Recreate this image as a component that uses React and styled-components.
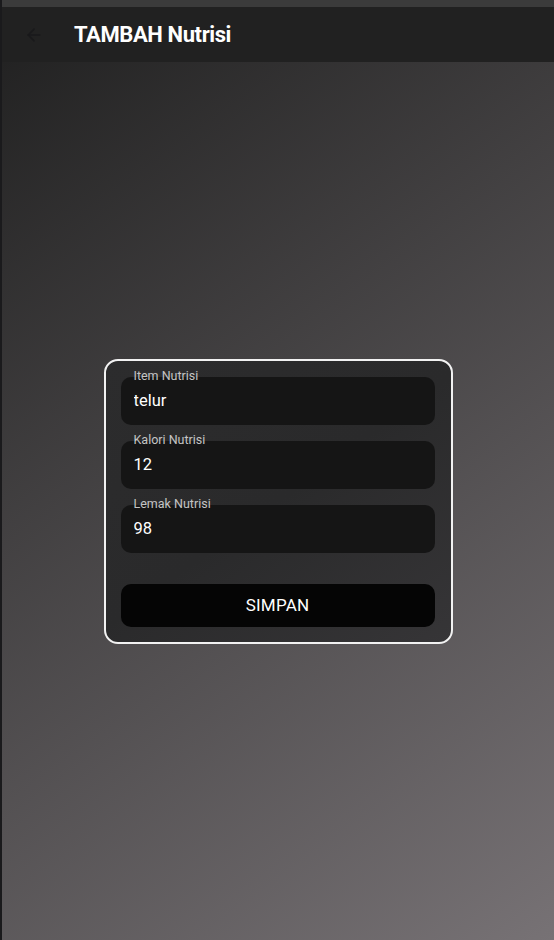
import styled, { createGlobalStyle } from "styled-components";
import { ArrowLeft } from "lucide-react";

const GlobalStyle = createGlobalStyle`
  html, body {
    margin: 0;
    padding: 0;
    background: #2b2b2d;
  }
  body {
    font-family: Roboto, "Noto Sans", sans-serif;
  }
`;

const fields = [
  { label: "Item Nutrisi", value: "telur" },
  { label: "Kalori Nutrisi", value: "12" },
  { label: "Lemak Nutrisi", value: "98" },
];

const App = () => {
  return (
    <Page>
      <GlobalStyle />
      <TopStrip />
      <Header>
        <BackButton aria-label="kembali">
          <ArrowLeft size={20} strokeWidth={2} />
        </BackButton>
        <Title>TAMBAH Nutrisi</Title>
      </Header>
      <Content>
        <Card>
          {fields.map((f) => (
            <Field key={f.label}>
              <Label>{f.label}</Label>
              <Input defaultValue={f.value} />
            </Field>
          ))}
          <SaveButton>SIMPAN</SaveButton>
        </Card>
      </Content>
    </Page>
  );
};

const Page = styled.div`
  width: 554px;
  height: 940px;
  display: flex;
  flex-direction: column;
  box-sizing: border-box;
  border-left: 2px solid #1a1a1c;
  background: linear-gradient(144deg, #1f1f1f 0%, #777275 100%);
  overflow: hidden;
`;

const TopStrip = styled.div`
  height: 7px;
  background: #3b3b3b;
  flex-shrink: 0;
`;

const Header = styled.header`
  height: 55px;
  flex-shrink: 0;
  display: flex;
  align-items: center;
  background: #212121;
  padding-left: 20px;
`;

const BackButton = styled.button`
  border: none;
  background: none;
  padding: 0;
  width: 24px;
  height: 24px;
  display: flex;
  align-items: center;
  justify-content: center;
  color: #19191b;
  margin-right: 28px;
`;

const Title = styled.h1`
  margin: 0;
  font-size: 22px;
  font-weight: 700;
  color: #ffffff;
  letter-spacing: -0.4px;
`;

const Content = styled.main`
  flex: 1;
  display: flex;
  align-items: center;
  justify-content: center;
`;

const Card = styled.div`
  width: 349px;
  box-sizing: border-box;
  border: 2px solid #f2f2f2;
  border-radius: 14px;
  background: linear-gradient(144deg, #2c2c2d 0%, #2a2a2b 50%, #363537 100%);
  padding: 16px 16px 15px 15px;
  display: flex;
  flex-direction: column;
  gap: 16px;
`;

const Field = styled.div`
  position: relative;
`;

const Label = styled.label`
  position: absolute;
  top: -8px;
  left: 13px;
  font-size: 12.5px;
  color: #c4c4c4;
  line-height: 14px;
`;

const Input = styled.input`
  width: 100%;
  height: 48px;
  box-sizing: border-box;
  border: none;
  outline: none;
  border-radius: 10px;
  background: #151515;
  color: #ffffff;
  font-family: Roboto, sans-serif;
  font-size: 16.5px;
  padding: 0 13px;
`;

const SaveButton = styled.button`
  margin-top: 15px;
  height: 43px;
  border: none;
  border-radius: 10px;
  background: #050505;
  color: #ffffff;
  font-family: Roboto, sans-serif;
  font-size: 17px;
  letter-spacing: 0.2px;
`;

export default App;
